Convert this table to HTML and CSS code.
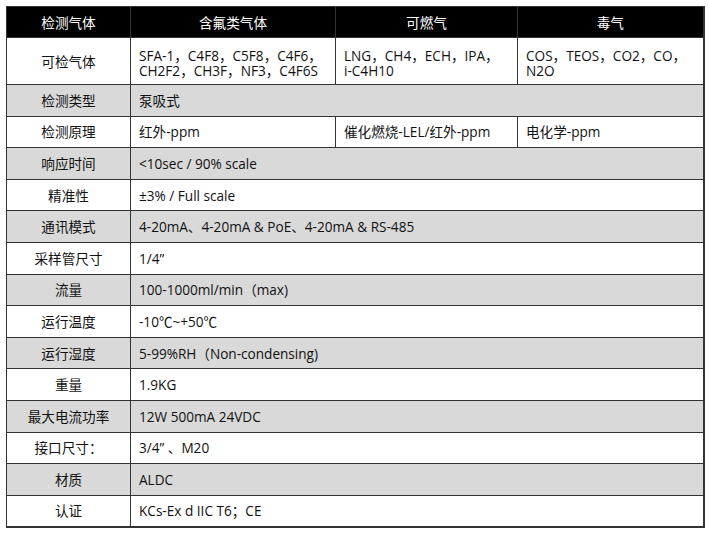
FILE: index.html
```html
<!DOCTYPE html>
<html lang="zh">
<head>
<meta charset="utf-8">
<link rel="stylesheet" href="styles.css">
</head>
<body>
<table class="spec">
  <colgroup>
    <col class="c1"><col class="c2"><col class="c3"><col class="c4">
  </colgroup>
  <thead>
    <tr class="head">
      <th>检测气体</th><th>含氟类气体</th><th>可燃气</th><th>毒气</th>
    </tr>
  </thead>
  <tbody>
    <tr class="tall">
      <td class="label">可检气体</td>
      <td>SFA-1，C4F8，C5F8，C4F6，<span class="nw">CH2F2</span>，CH3F，NF3，C4F6S</td>
      <td>LNG，CH4，ECH，IPA，<span class="nw">i-C4H10</span></td>
      <td>COS，TEOS，CO2，CO，N2O</td>
    </tr>
    <tr class="gray"><td class="label">检测类型</td><td colspan="3">泵吸式</td></tr>
    <tr><td class="label">检测原理</td><td>红外-ppm</td><td>催化燃烧-LEL/红外-ppm</td><td>电化学-ppm</td></tr>
    <tr class="gray"><td class="label">响应时间</td><td colspan="3">&lt;10sec / 90% scale</td></tr>
    <tr><td class="label">精准性</td><td colspan="3">±3% / Full scale</td></tr>
    <tr class="gray"><td class="label">通讯模式</td><td colspan="3">4-20mA、4-20mA &amp; PoE、4-20mA &amp; RS-485</td></tr>
    <tr><td class="label">采样管尺寸</td><td colspan="3">1/4”</td></tr>
    <tr class="gray"><td class="label">流量</td><td colspan="3">100-1000ml/min（max)</td></tr>
    <tr><td class="label">运行温度</td><td colspan="3">-10℃~+50℃</td></tr>
    <tr class="gray"><td class="label">运行湿度</td><td colspan="3">5-99%RH（Non-condensing)</td></tr>
    <tr><td class="label">重量</td><td colspan="3">1.9KG</td></tr>
    <tr class="gray"><td class="label">最大电流功率</td><td colspan="3">12W 500mA 24VDC</td></tr>
    <tr><td class="label">接口尺寸：</td><td colspan="3">3/4” 、M20</td></tr>
    <tr class="gray"><td class="label">材质</td><td colspan="3">ALDC</td></tr>
    <tr><td class="label">认证</td><td colspan="3">KCs-Ex d IIC T6；CE</td></tr>
  </tbody>
</table>
</body>
</html>
```

FILE: styles.css
```css
html, body {
  margin: 0;
  background: #ffffff;
}
body {
  padding: 6px;
  font-family: "Open Sans", "Noto Sans CJK SC", sans-serif;
  font-size: 13.6px;
  color: #111111;
}
.spec {
  border-collapse: collapse;
  table-layout: fixed;
  width: 697px;
  border-right: 2px solid #333333;
  border-bottom: 2px solid #333333;
}
.c1 { width: 124px; }
.c2 { width: 205px; }
.c3 { width: 182px; }
.c4 { width: 186px; }
.spec th,
.spec td {
  border: 1px solid #333333;
  padding: 0 8px;
  line-height: 15px;
  height: 31.6px;
  box-sizing: border-box;
  text-align: left;
  vertical-align: middle;
  font-weight: normal;
}
.head th {
  background: #000000;
  color: #ffffff;
  text-align: center;
  height: 31px;
}
.tall td {
  height: 47px;
  line-height: 15px;
  padding-top: 4px;
}
.spec td.label {
  text-align: center;
  padding: 0 4px;
}
.nw {
  white-space: nowrap;
}
.gray td {
  background: #d9d9d9;
}
```
